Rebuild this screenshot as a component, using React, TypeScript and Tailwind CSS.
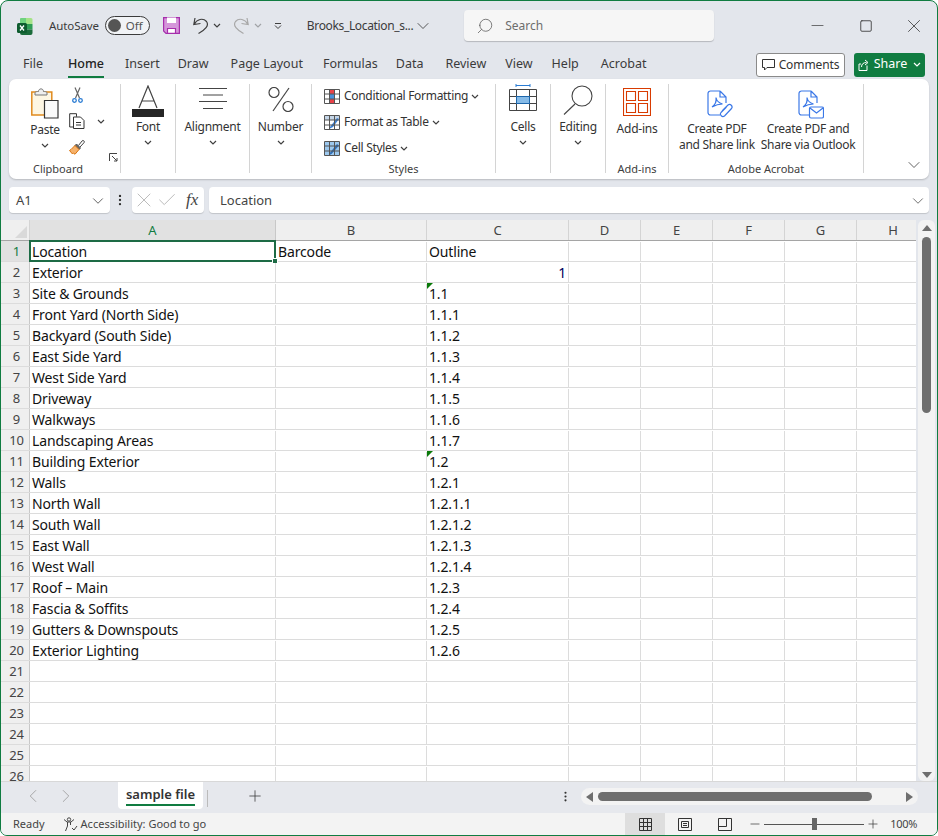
import { ChevronDown, ChevronLeft, ChevronRight, Plus, Search, X, Check, MoreVertical, Minus, Square } from "lucide-react";

const font = { fontFamily: '"Noto Sans", "Open Sans", Arial, sans-serif' };

const columns = [
  { label: "B", width: "w-[151px]" },
  { label: "C", width: "w-[142px]" },
  { label: "D", width: "w-[72px]" },
  { label: "E", width: "w-[72px]" },
  { label: "F", width: "w-[72px]" },
  { label: "G", width: "w-[72px]" },
  { label: "H", width: "w-[59px] pl-[13px]" },
];

const rows: [string, string, string, boolean?][] = [
  ["Location", "Barcode", "Outline"],
  ["Exterior", "", "1"],
  ["Site & Grounds", "", "1.1", true],
  ["Front Yard (North Side)", "", "1.1.1"],
  ["Backyard (South Side)", "", "1.1.2"],
  ["East Side Yard", "", "1.1.3"],
  ["West Side Yard", "", "1.1.4"],
  ["Driveway", "", "1.1.5"],
  ["Walkways", "", "1.1.6"],
  ["Landscaping Areas", "", "1.1.7"],
  ["Building Exterior", "", "1.2", true],
  ["Walls", "", "1.2.1"],
  ["North Wall", "", "1.2.1.1"],
  ["South Wall", "", "1.2.1.2"],
  ["East Wall", "", "1.2.1.3"],
  ["West Wall", "", "1.2.1.4"],
  ["Roof – Main", "", "1.2.3"],
  ["Fascia & Soffits", "", "1.2.4"],
  ["Gutters & Downspouts", "", "1.2.5"],
  ["Exterior Lighting", "", "1.2.6"],
  ["", "", ""],
  ["", "", ""],
  ["", "", ""],
  ["", "", ""],
  ["", "", ""],
  ["", "", ""],
];

function Caret({ className = "", color = "#404040" }: { className?: string; color?: string }) {
  return (
    <svg width="8" height="5" viewBox="0 0 8 5" fill="none" stroke={color} strokeWidth="1.2" className={className}>
      <path d="M1 1l3 3 3-3" />
    </svg>
  );
}

function ExcelLogo() {
  return (
    <svg width="16" height="17" viewBox="0 0 16 17">
      <path d="M4 0h5v6H3V1a1 1 0 0 1 1-1z" fill="#6fd27f" />
      <path d="M9 0h5a1.500 1.500 0 0 1 1.500 1.500V6H9z" fill="#a5e388" />
      <path d="M3 6h6v5.500H3z" fill="#1f8a4d" />
      <path d="M9 6h6.500v5.500H9z" fill="#2f9e55" />
      <path d="M3 11.500h12.500V15a2 2 0 0 1-2 2H5a2 2 0 0 1-2-2z" fill="#1a6b3a" />
      <rect x="0" y="5" width="10" height="10" rx="1.500" fill="#0e5c2f" />
      <path d="M3 7.500l4 5M7 7.500l-4 5" stroke="#fff" strokeWidth="1.300" />
    </svg>
  );
}

function SaveIcon() {
  return (
    <svg width="17" height="17" viewBox="0 0 17 17" fill="#d596da" stroke="#a62eac" strokeWidth="1.200">
      <path d="M.6.6h15.800v15.800H3L.6 14z" />
      <path d="M4 .6h9v5.400H4z" fill="#fff" stroke="none" />
      <path d="M4.500 11.500h8v4.900h-8z" fill="#fff" />
    </svg>
  );
}

function UndoIcon({ color, flip = false, className = "" }: { color: string; flip?: boolean; className?: string }) {
  return (
    <svg width="17" height="17" viewBox="0 0 17 17" fill="none" stroke={color} strokeWidth="1.200" className={`${flip ? "-scale-x-100" : ""} ${className}`}>
      <path d="M2 1L.8 7.500 7.500 6.500M1 7.400C4 2 10 .6 13.500 4.500 16.500 8.500 12 13 5.500 16.500" />
    </svg>
  );
}

function TitleBar() {
  return (
    <div className="flex h-[48px] items-center pt-[1px] text-xs text-[#3b3b3b]">
      <div className="ml-[16px] mt-[1px]"><ExcelLogo /></div>
      <span className="ml-[16px] text-[11.5px] tracking-[-0.1px]">AutoSave</span>
      <div className="ml-[6px] flex h-[19px] w-[45px] items-center rounded-full border border-[#3b3b3b] bg-white/50 pl-[2px]">
        <span className="h-[13px] w-[13px] rounded-full bg-[#555]" />
        <span className="ml-[5px] text-[11.5px] text-[#555]">Off</span>
      </div>
      <div className="ml-[13px]"><SaveIcon /></div>
      <UndoIcon color="#404040" className="ml-[13px]" />
      <Caret className="ml-[3px]" />
      <UndoIcon color="#a8a8a8" flip className="ml-[11px]" />
      <Caret className="ml-[5px] opacity-40" />
      <svg width="8" height="6" viewBox="0 0 8 6" fill="none" stroke="#404040" className="ml-[12px]">
        <path d="M1 .5h6M1 2.500l3 3 3-3" />
      </svg>
      <span className="ml-[25px] text-xs tracking-[-0.35px]">Brooks_Location_s...</span>
      <ChevronDown size={20} strokeWidth={1} />
      <div className="ml-[31px] flex h-[31px] w-[250px] items-center rounded-[4px] bg-[#f6f6f6] pl-[12px] shadow-[0_1px_1px_rgba(0,0,0,0.2)]">
        <Search size={18} strokeWidth={1} className="-scale-x-100 text-[#555]" />
        <span className="ml-[11px] text-[#6d6d6d]">Search</span>
      </div>
      <Minus size={19} strokeWidth={0.9} className="ml-[94px]" />
      <Square size={14} strokeWidth={1.500} className="ml-[32px]" />
      <X size={22} strokeWidth={0.9} className="ml-[30px]" />
    </div>
  );
}

function Tabs() {
  const tabs = ["File", "Home", "Insert", "Draw", "Page Layout", "Formulas", "Data", "Review", "View", "Help", "Acrobat"];
  const gaps = ["ml-[22px]", "ml-[25px]", "ml-[21px]", "ml-[18px]", "ml-[22px]", "ml-[20px]", "ml-[18px]", "ml-[22px]", "ml-[19px]", "ml-[19px]", "ml-[22px]"];
  return (
    <div className="flex h-[30px] items-center pt-[1px] text-[12.5px] text-[#3b3b3b]">
      {tabs.map((t, i) => (
        <div key={t} className={`relative ${gaps[i]} ${t === "Home" ? "font-medium text-[#222]" : ""}`}>
          {t}
          {t === "Home" && <span className="absolute -bottom-[4px] left-0 right-0 h-[2px] bg-[#107c41]" />}
        </div>
      ))}
      <button className="ml-auto flex h-[24px] w-[89px] items-center justify-center gap-[4px] rounded-[3px] border border-[#8a8a8a] bg-white text-[12px] tracking-[-0.1px] text-[#333]">
        <svg width="13" height="12" viewBox="0 0 13 12" fill="none" stroke="#333">
          <path d="M.5.500h12v8H5L2.500 11V8.500h-2z" />
        </svg>
        Comments
      </button>
      <button className="ml-[9px] mr-[12px] flex h-[24px] w-[71px] items-center justify-center gap-[4px] rounded-[3px] bg-[#107c41] text-[12.5px] text-white">
        <svg width="12" height="12" viewBox="0 0 12 12" fill="none" stroke="#fff">
          <path d="M9 6.500v5H1V5h2M3.500 8c0-3 2-4.500 5-4.500M7 1l3 2.500L7 6" />
        </svg>
        Share
        <Caret className="ml-[2px]" color="#fff" />
      </button>
    </div>
  );
}

function RibbonGroup({ width, label, labelClass = "", children }: { width: string; label?: string; labelClass?: string; children: React.ReactNode }) {
  return (
    <div className={`${width} flex h-[89px] shrink-0 flex-col items-center border-r border-[#d4d4d4]`}>
      <div className="flex w-full flex-1 flex-col items-center">{children}</div>
      <div className={`-mb-[3px] text-[11px] leading-[14px] text-[#404040] ${labelClass}`}>{label}</div>
    </div>
  );
}

function BigButton({ label, icon }: { label: string; icon: React.ReactNode }) {
  return (
    <div className="flex flex-col items-center">
      <div className="flex h-[33px] items-end">{icon}</div>
      <span className="mt-[2px] text-xs leading-[16px] tracking-[-0.25px] text-[#333]">{label}</span>
      <Caret className="mt-[5px]" />
    </div>
  );
}

function GridIcon({ children }: { children?: React.ReactNode }) {
  return (
    <svg width="16" height="15" viewBox="0 0 16 15" fill="#fff" stroke="#555" className="shrink-0">
      <path d="M.5.500h15v14H.5z" />
      {children}
      <path d="M.5 5h15M.5 10h15M5.500.5v14M10.500.5v14" fill="none" />
    </svg>
  );
}

function AcrobatDoc() {
  return (
    <path d="M13 1H3.500A2.500 2.500 0 0 0 1 3.500v19A2.500 2.500 0 0 0 3.500 25H13M13 1l6 6v6M13 1v6h6M5 17c3-2 4.500-6 4-9.500 .5 3 3 5.500 6.500 6.500-3.500 0-7 1-10.500 3z" />
  );
}

function Ribbon() {
  return (
    <div className="mx-[8px] flex h-[100px] items-start rounded-[7px] bg-white pt-[5px] text-[#333] shadow-[0_1px_2px_rgba(0,0,0,0.2)]">
      <RibbonGroup width="w-[112px]" label="Clipboard" labelClass="pr-[13px]">
        <div className="relative flex w-full flex-1">
          <div className="ml-[22px] mt-[4px] flex w-[28px] flex-col items-center">
            <svg width="28" height="31" viewBox="0 0 28 31" fill="none" className="shrink-0">
              <path d="M.8 4h20v23H.8z" fill="#fdf6e3" stroke="#e08a1e" strokeWidth="1.500" />
              <path d="M4 4.500c1-1 2-1 3.500-1 0-3.500 5-3.500 5 0 1.500 0 2.500 0 3.500 1v2.500H4z" fill="#eee" stroke="#777" />
              <path d="M13.500 12.500h13.500v17.500H13.500z" fill="#fafafa" stroke="#333" strokeWidth="1.200" />
            </svg>
            <span className="mt-[3px] text-xs leading-[16px] tracking-[-0.25px]">Paste</span>
            <Caret className="mt-[5px]" />
          </div>
          <div className="ml-[10px] mt-[3px] flex flex-col">
            <svg width="11" height="16" viewBox="0 0 11 16" fill="none" className="ml-[3px]">
              <path d="M3.500 11L8 .5M7.500 11L3 .5" stroke="#666" strokeWidth="1.200" />
              <circle cx="2.500" cy="13.500" r="1.800" stroke="#2b7cd3" strokeWidth="1.300" />
              <circle cx="8.500" cy="13.500" r="1.800" stroke="#2b7cd3" strokeWidth="1.300" />
            </svg>
            <div className="mt-[10px] flex items-center">
              <svg width="16" height="16" viewBox="0 0 16 16" fill="none" stroke="#333">
                <path d="M4.500 14H.7V.7h6.800v3M4.500 4h7l3.500 3.500v8H4.500zM7 9.500h5M7 12h5" />
              </svg>
              <Caret className="ml-[12px]" />
            </div>
            <svg width="16" height="16" viewBox="0 0 16 16" className="mt-[10px]" fill="none">
              <path d="M9.500 6.500L13 2a1.300 1.300 0 0 1 2 1.700L11 8" fill="#fff" stroke="#444" />
              <path d="M7.500 5L11.500 9 10 10.500 6 6.500z" fill="#666" stroke="#555" />
              <path d="M6 6.500L10 10.500 6 15.300 4.500 14 3.500 15 .5 11.500 2 10.500z" fill="#f6b26b" stroke="#d9730d" />
            </svg>
          </div>
          <svg width="9" height="9" viewBox="0 0 9 9" fill="none" stroke="#444" className="absolute bottom-0 right-[2px]">
            <path d="M.5 8V.5H8M3 3l5 5M8 5v3H5" />
          </svg>
        </div>
      </RibbonGroup>
      <RibbonGroup width="w-[55px]">
        <BigButton
          label="Font"
          icon={
            <svg width="32" height="32" viewBox="0 0 32 32" fill="none">
              <path d="M7 23L16 1l9 22M10 16h12" stroke="#444" strokeWidth="1.200" />
              <rect y="24" width="32" height="8" fill="#262626" />
            </svg>
          }
        />
      </RibbonGroup>
      <RibbonGroup width="w-[74px]">
        <BigButton
          label="Alignment"
          icon={
            <svg width="28" height="21" viewBox="0 0 28 21" stroke="#444" className="mb-[8px]">
              <path d="M0 .5h28M4 7h20M0 13.500h28M4 20.500h20" />
            </svg>
          }
        />
      </RibbonGroup>
      <RibbonGroup width="w-[62px]">
        <BigButton
          label="Number"
          icon={
            <svg width="26" height="25" viewBox="0 0 26 25" fill="none" stroke="#444" strokeWidth="1.200" className="mb-[5px]">
              <circle cx="6" cy="5.500" r="5" />
              <circle cx="20" cy="19.500" r="5" />
              <path d="M21 1L5 24" />
            </svg>
          }
        />
      </RibbonGroup>
      <RibbonGroup width="w-[184px]" label="Styles">
        <div className="flex w-full flex-col gap-[10px] pl-[12px] pt-[4px] text-xs leading-[16px] tracking-[-0.3px]">
          <div className="flex items-center gap-[4px]">
            <GridIcon><path d="M5.500 1h5v4h-5zM5.500 10h5v4h-5z" fill="#e8434a" stroke="none" /><path d="M5.500 5h5v5h-5z" fill="#4a90d9" stroke="none" /></GridIcon>
            Conditional Formatting <Caret className="-ml-[1px]" />
          </div>
          <div className="flex items-center gap-[4px]">
            <GridIcon>
              <path d="M1 1h14v4H1z" fill="#c5d6e8" stroke="none" />
              <path d="M6 12l7-9 2 1-6 8-4 2z" fill="#3b82d6" stroke="none" />
            </GridIcon>
            Format as Table <Caret className="-ml-[1px]" />
          </div>
          <div className="flex items-center gap-[4px]">
            <GridIcon>
              <path d="M1 1h14v13H1z" fill="#9cc8ee" stroke="none" />
              <path d="M5 13l8-10 2 1.500-7 8-3 2z" fill="#2f6fb7" stroke="none" />
            </GridIcon>
            Cell Styles <Caret className="-ml-[1px]" />
          </div>
        </div>
      </RibbonGroup>
      <RibbonGroup width="w-[55px]">
        <BigButton
          label="Cells"
          icon={
            <svg width="28" height="28" viewBox="0 0 28 28" fill="none" stroke="#444" className="mb-[5px]">
              <path d="M7 1.500h14M7 0v3M21 0v3" stroke="#2b7cd3" />
              <path d="M.5 5.500h27v21H.5zM.5 12.500h27M.5 19.500h27M7.500 5.500v21M20.500 5.500v21" />
              <rect x="7.500" y="12.500" width="13" height="7" fill="#86bbe8" stroke="#1c66ab" />
            </svg>
          }
        />
      </RibbonGroup>
      <RibbonGroup width="w-[55px]">
        <BigButton
          label="Editing"
          icon={
            <svg width="30" height="30" viewBox="0 0 30 30" fill="none" stroke="#444" strokeWidth="1.100" className="mb-[2px]">
              <circle cx="19" cy="11" r="10" />
              <path d="M12 19L1 29.500" />
            </svg>
          }
        />
      </RibbonGroup>
      <RibbonGroup width="w-[63px]" label="Add-ins">
        <svg width="28" height="28" viewBox="0 0 28 28" fill="none" stroke="#d83b01" strokeWidth="1.100" className="mt-[4px]">
          <path d="M.5.500h27v27H.5zM3.500 3.500h9v9h-9zM15.500 3.500h9v9h-9zM3.500 15.500h9v9h-9zM15.500 15.500h9v9h-9z" />
        </svg>
        <span className="mt-[5px] text-xs leading-[16px] tracking-[-0.25px]">Add-ins</span>
      </RibbonGroup>
      <RibbonGroup width="w-[195px]" label="Adobe Acrobat">
        <div className="flex w-full gap-[6px] whitespace-nowrap pl-[10px] text-center text-xs leading-[16px] tracking-[-0.3px]">
          <div className="flex flex-col items-center">
            <svg width="26" height="29" viewBox="0 0 26 29" fill="none" stroke="#3b78e7" strokeWidth="1.200" className="ml-[6px] mt-[6px]">
              <AcrobatDoc />
              <path d="M15 21l6-6a2.500 2.500 0 0 1 3.500 3.500l-7 7.500a2.500 2.500 0 0 1-3.500-3.500l5.500-5.500" />
            </svg>
            <span className="mt-[2px]">Create PDF<br />and Share link</span>
          </div>
          <div className="flex flex-col items-center">
            <svg width="26" height="29" viewBox="0 0 26 29" fill="none" stroke="#3b78e7" strokeWidth="1.200" className="ml-[6px] mt-[6px]">
              <AcrobatDoc />
              <rect x="11.500" y="17" width="14" height="11" rx="1.500" fill="#fff" />
              <path d="M12 18l6.500 5 6.500-5" />
            </svg>
            <span className="mt-[2px]">Create PDF and<br />Share via Outlook</span>
          </div>
        </div>
      </RibbonGroup>
      <div className="flex h-[91px] flex-1 items-end justify-end pr-[5px]">
        <ChevronDown size={20} strokeWidth={1} className="text-[#444]" />
      </div>
    </div>
  );
}

function FormulaBar() {
  return (
    <div className="mt-[8px] flex h-[26px] items-center text-[13px] text-[#444]">
      <div className="ml-[8px] flex h-[26px] w-[101px] items-center justify-between rounded-[4px] bg-white pl-[7px] pr-[3px] pt-[1px] shadow-[0_1px_1px_rgba(0,0,0,0.15)]">
        A1
        <ChevronDown size={18} strokeWidth={1.100} />
      </div>
      <MoreVertical size={14} strokeWidth={2} className="ml-[3px] text-[#333]" />
      <div className="ml-[5px] flex h-[26px] w-[72px] items-center rounded-[4px] bg-white shadow-[0_1px_1px_rgba(0,0,0,0.15)]">
        <X size={24} strokeWidth={0.9} className="text-[#b5b5b5]" />
        <Check size={22} strokeWidth={1} className="text-[#b5b5b5]" />
        <span className="ml-[8px] text-[17px] italic text-[#444]" style={{ fontFamily: '"Liberation Serif", serif' }}>fx</span>
      </div>
      <div className="ml-[5px] flex h-[26px] w-[720px] items-center justify-between rounded-[4px] bg-white pl-[11px] pr-[2px] pt-[1px] shadow-[0_1px_1px_rgba(0,0,0,0.15)]">
        Location
        <ChevronDown size={18} strokeWidth={1} />
      </div>
    </div>
  );
}

function HeaderRow() {
  return (
    <div className="flex h-[21px] shrink-0 border-b border-[#a5a5a5] text-[13px] text-[#444]">
      <div className="flex w-[29px] items-end justify-end border-r border-[#d4d4d4] bg-[#efefef] p-[2px]">
        <span className="h-0 w-0 border-b-[12px] border-l-[12px] border-b-[#d9d9d9] border-l-transparent" />
      </div>
      <div className="flex w-[246px] items-center justify-center border-r border-[#c8c8c8] bg-[#e1e1e1] pt-[1px] text-[#107c41]">A</div>
      {columns.map((c) => (
        <div key={c.label} className={`${c.width} flex items-center justify-center border-r border-[#d4d4d4] bg-[#efefef] pt-[1px] last:border-r-0`}>{c.label}</div>
      ))}
    </div>
  );
}

function SheetRow({ row, index }: { row: [string, string, string, boolean?]; index: number }) {
  const selected = index === 0;
  const numeric = row[2] === "1";
  return (
    <div className="flex h-[21px] shrink-0 border-b border-[#dcdcdc] pt-[1px] text-[14px] tracking-[-0.15px] text-[#111]">
      <div className={`-mt-[1px] flex w-[29px] items-center justify-center border-r border-[#c8c8c8] pl-[3px] pt-[1px] text-[13px] ${selected ? "bg-[#e1e1e1] text-[#107c41]" : "bg-[#efefef] text-[#444]"}`}>{index + 1}</div>
      <div className="relative flex w-[246px] items-center border-r border-[#dcdcdc] pl-[2px]">
        {row[0]}
        {selected && (
          <>
            <span className="absolute -left-[1px] -top-[2px] bottom-[-1px] right-[-1px] border-2 border-[#1d6b45]" />
            <span className="absolute -bottom-[3px] -right-[3px] h-[6px] w-[6px] border border-white bg-[#1d6b45]" />
          </>
        )}
      </div>
      <div className="flex w-[151px] items-center border-r border-[#dcdcdc] pl-[2px]">{row[1]}</div>
      <div className={`relative flex w-[142px] items-center border-r border-[#dcdcdc] pl-[2px] ${numeric ? "justify-end pr-[2px] text-[#00005a]" : ""}`}>
        {row[3] && <span className="absolute left-0 -top-[1px] h-0 w-0 border-r-[6px] border-t-[6px] border-r-transparent border-t-[#0a7a0a]" />}
        {row[2]}
      </div>
      {columns.slice(2).map((c) => (
        <div key={c.label} className={`${c.width} border-r border-[#dcdcdc] last:border-r-0`} />
      ))}
    </div>
  );
}

function VerticalScroll() {
  return (
    <div className="ml-[2px] flex w-[17px] flex-col items-center rounded-[6px] bg-[#f3f3f3] pt-[5px]">
      <span className="h-0 w-0 border-x-[5px] border-b-[6px] border-x-transparent border-b-[#6e6e6e]" />
      <span className="mt-[6px] h-[176px] w-[9px] rounded-full bg-[#6e6e6e]" />
      <span className="mb-[3px] mt-auto h-0 w-0 border-x-[5px] border-t-[6px] border-x-transparent border-t-[#6e6e6e]" />
    </div>
  );
}

function SheetTabs() {
  return (
    <div className="flex h-[32px] shrink-0 border-t border-[#d8d8d8] bg-[#e6e8ed] text-[#888]">
      <ChevronLeft size={22} strokeWidth={0.9} className="ml-[21px] mt-[3px] text-[#999]" />
      <ChevronRight size={22} strokeWidth={0.9} className="ml-[11px] mt-[3px] text-[#999]" />
      <div className="relative ml-[41px] flex h-[27px] w-[85px] justify-center rounded-b-[4px] bg-white pt-[3px] text-[13px] font-semibold text-[#333]">
        sample file
        <span className="absolute bottom-[3px] left-[8px] right-[8px] h-[2px] bg-[#107c41]" />
      </div>
      <span className="ml-[4px] mt-[8px] h-[17px] w-px bg-[#bbb]" />
      <Plus size={18} strokeWidth={1} className="ml-[38px] mt-[5px] text-[#333]" />
      <MoreVertical size={13} strokeWidth={2} className="ml-[295px] mt-[8px] text-[#333]" />
      <div className="ml-[9px] mt-[6px] flex h-[17px] w-[337px] items-center rounded-full bg-[#f3f3f3] pl-[5px]">
        <span className="h-0 w-0 border-y-[5px] border-r-[7px] border-y-transparent border-r-[#6e6e6e]" />
        <span className="ml-[5px] h-[9px] w-[274px] rounded-full bg-[#6e6e6e]" />
        <span className="ml-auto mr-[5px] h-0 w-0 border-y-[5px] border-l-[7px] border-y-transparent border-l-[#6e6e6e]" />
      </div>
    </div>
  );
}

function StatusBar() {
  return (
    <div className="flex h-[22px] shrink-0 items-center bg-[#f3f3f3] text-[11px] text-[#444]">
      <span className="ml-[12px]">Ready</span>
      <svg width="15" height="15" viewBox="0 0 15 15" fill="none" stroke="#444" className="ml-[18px]">
        <circle cx="6" cy="2.500" r="1.700" />
        <path d="M1 2.500l3 2.500h4l3-2.500M4.500 5v4L2.500 14M7.500 5v3M9 11l2 2 3-4" />
      </svg>
      <span className="ml-[3px]">Accessibility: Good to go</span>
      <div className="ml-[419px] flex h-[22px] w-[40px] items-center justify-center bg-[#dedede]">
        <svg width="13" height="13" viewBox="0 0 13 13" fill="none" stroke="#333">
          <path d="M.5.500h12v12H.5zM.5 4.500h12M.5 8.500h12M4.500.5v12M8.500.5v12" />
        </svg>
      </div>
      <svg width="14" height="13" viewBox="0 0 14 13" fill="none" stroke="#333" className="ml-[13px]">
        <path d="M.5.500h13v12H.5zM3.500 3.500h7v6h-7zM5 5.500h4M5 7.500h4" />
      </svg>
      <svg width="14" height="13" viewBox="0 0 14 13" fill="none" stroke="#333" className="ml-[26px]">
        <path d="M.5.500h13v12H.5zM.5 8.500h8V.5" />
      </svg>
      <Minus size={14} strokeWidth={1.200} className="ml-[16px] text-[#333]" />
      <div className="relative ml-[2px] flex h-[14px] w-[100px] items-center">
        <span className="h-px w-full bg-[#555]" />
        <span className="absolute left-[48px] h-[12px] w-[5px] bg-[#666]" />
      </div>
      <Plus size={14} strokeWidth={1.200} className="ml-[2px] text-[#333]" />
      <span className="ml-[10px] tracking-[-0.3px]">100%</span>
    </div>
  );
}

export default function App() {
  return (
    <div className="h-[836px] w-[938px] overflow-hidden bg-white" style={font}>
      <div className="flex h-full flex-col overflow-hidden rounded-b-[7px] rounded-t-[8px] border border-[#107c41] bg-[#e3e6ec]">
        <TitleBar />
        <Tabs />
        <Ribbon />
        <FormulaBar />
        <div className="mt-[7px] flex min-h-0 flex-1 flex-col">
          <div className="flex min-h-0 flex-1">
            <div className="flex w-[915px] flex-col overflow-hidden bg-white">
              <HeaderRow />
              {rows.map((row, i) => (
                <SheetRow key={i} row={row} index={i} />
              ))}
            </div>
            <VerticalScroll />
          </div>
          <SheetTabs />
          <StatusBar />
        </div>
      </div>
    </div>
  );
}
